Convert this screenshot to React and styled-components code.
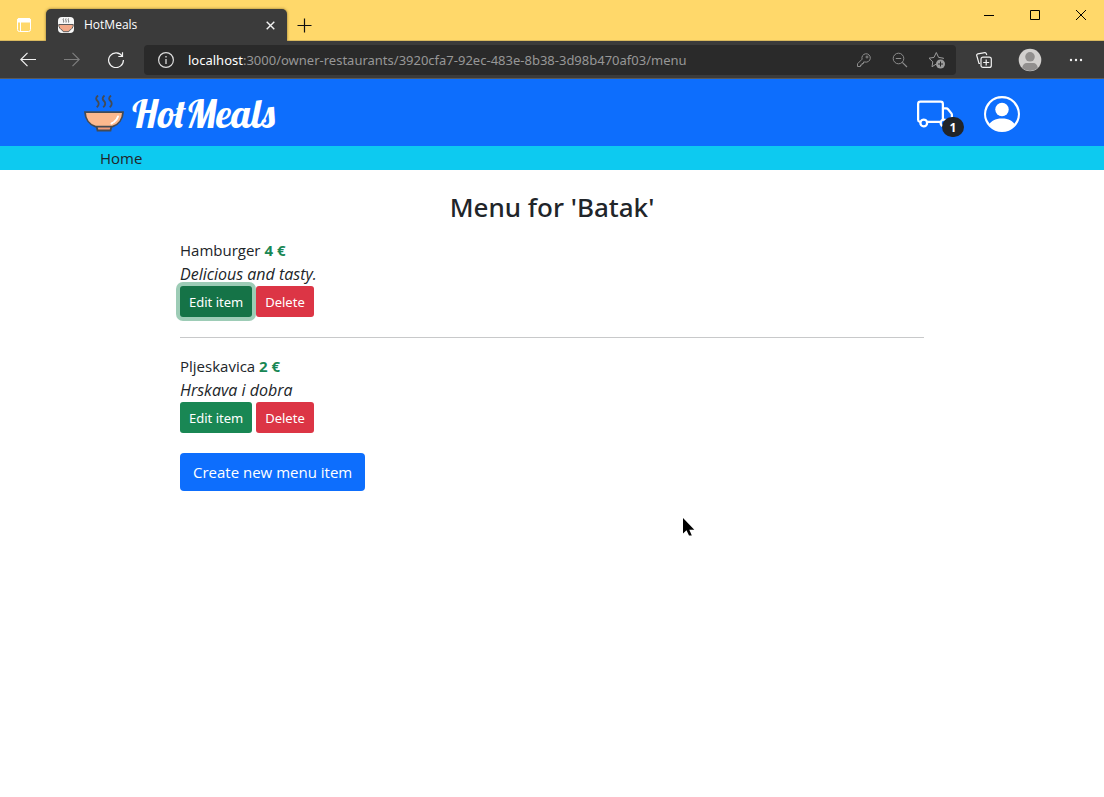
import React from "react";
import styled, { createGlobalStyle, css } from "styled-components";
import { BsTruck, BsPersonCircle } from "react-icons/bs";

const GlobalStyle = createGlobalStyle`
  *, *::before, *::after { box-sizing: border-box; }
  body {
    margin: 0;
    background: #fff;
    color: #212529;
    font-family: "Segoe UI", "Open Sans", "Noto Sans", sans-serif;
    font-size: 15px;
    line-height: 24px;
  }
  button, input { font: inherit; }
  svg { display: block; flex: none; }
`;

const TitleBar = styled.div`
  display: flex;
  align-items: flex-end;
  height: 41px;
  padding-left: 17px;
  background: #ffd86a;
  box-shadow: inset 0 -1px #d9b95f;
`;

const PlainButton = styled.button`
  display: flex;
  align-items: center;
  justify-content: center;
  flex: none;
  padding: 0;
  border: 0;
  background: none;
  color: ${(p) => p.$color || "#f2f2f2"};
`;

const TabActions = styled(PlainButton)`
  height: 32px;
  margin-right: 15px;
`;

const Tab = styled.div`
  display: flex;
  align-items: center;
  gap: 10px;
  width: 241px;
  height: 32px;
  padding: 0 12px;
  border-radius: 5px 5px 0 0;
  background: #3b3b3b;
  box-shadow: 0 0 3px rgba(60, 45, 0, 0.6);
  clip-path: inset(-4px -4px 0 -4px);
  color: #fff;
  font-size: 12px;
`;

const TabTitle = styled.span`
  flex: 1;
`;

const NewTab = styled(PlainButton)`
  height: 32px;
  margin-left: 10px;
`;

const WindowControls = styled.div`
  display: flex;
  align-self: flex-start;
  margin-left: auto;
`;

const WindowButton = styled(PlainButton)`
  width: 46px;
  height: 30px;
`;

const Toolbar = styled.div`
  display: flex;
  align-items: center;
  height: 38px;
  padding: 0 20px;
  background: #3b3b3b;
  border-bottom: 1px solid #5a5a5a;
`;

const ToolGroup = styled.div`
  display: flex;
  align-items: center;
  gap: ${(p) => p.$gap}px;
`;

const AddressBar = styled.div`
  display: flex;
  align-items: center;
  flex: 1;
  min-width: 0;
  height: 30px;
  margin: 0 20px;
  padding: 0 10px 0 14px;
  border-radius: 4px;
  background: #2a2a2a;
  font-family: "Segoe UI", "Noto Sans", sans-serif;
  font-size: 13px;
`;

const Host = styled.label`
  margin-left: 14px;
  color: #fff;
`;

const AddressInput = styled.input`
  flex: 1;
  min-width: 0;
  padding: 0;
  border: 0;
  outline: 0;
  background: none;
  color: #979797;
`;

const Container = styled.div`
  display: flex;
  align-items: center;
  max-width: 960px;
  margin: 0 auto;
  padding: 0 12px;
`;

const Header = styled.header`
  background: #0d6efd;
`;

const HeaderRow = styled(Container)`
  height: 67px;
  padding-top: 2px;
`;

const Brand = styled.a`
  display: flex;
  align-items: center;
  gap: 8px;
  color: #fff;
  font: 39px/38px Lobster, "Liberation Serif", serif;
  text-decoration: none;
`;

const HeaderActions = styled.div`
  display: flex;
  gap: 31px;
  margin-left: auto;
`;

const IconLink = styled.a`
  position: relative;
  color: #fff;
`;

const Badge = styled.span`
  position: absolute;
  right: -11px;
  bottom: -5px;
  width: 22px;
  height: 20px;
  border-radius: 10px;
  background: #212529;
  color: #fff;
  font-size: 12px;
  font-weight: 700;
  line-height: 21px;
  text-align: center;
`;

const Nav = styled.nav`
  background: #0dcaf0;
`;

const NavLink = styled.a`
  padding-left: 16px;
  color: #212529;
  text-decoration: none;
`;

const Main = styled.main`
  width: 80%;
  max-width: 768px;
  margin: 0 auto;
  padding: 20px 12px;
`;

const Title = styled.h1`
  margin: 0 0 14px;
  font-family: "Segoe UI", "Noto Sans", sans-serif;
  font-size: 26px;
  font-weight: 500;
  line-height: 34px;
  text-align: center;
`;

const MenuList = styled.ul`
  margin: 0 0 20px;
  padding: 0;
  list-style: none;
`;

const MenuItem = styled.li`
  & + & {
    margin-top: 20px;
    padding-top: 16px;
    border-top: 1px solid #c8c9ca;
  }
`;

const Price = styled.strong`
  color: #198754;
`;

const Description = styled.div`
  font-size: 16px;
  font-style: italic;
`;

const ItemActions = styled.div`
  display: flex;
  gap: 4px;
`;

const tones = { success: "#198754", danger: "#dc3545", primary: "#0d6efd" };

const Button = styled.button`
  padding: 6px 12px;
  border: 1px solid transparent;
  border-radius: 4px;
  background: ${(p) => tones[p.$tone]};
  background-clip: border-box;
  background-origin: border-box;
  color: #fff;
  line-height: 24px;
  ${(p) =>
    p.$small &&
    css`
      padding: 5px 8px 3px;
      border-radius: 3px;
      font-family: "Segoe UI", "Noto Sans", sans-serif;
      font-size: 13px;
      line-height: 21px;
    `}
  ${(p) =>
    p.$focused &&
    css`
      background: #157347;
      box-shadow: 0 0 0 4px rgba(60, 153, 110, 0.5);
    `}
`;

const Pointer = styled.svg`
  position: absolute;
  left: 683px;
  top: 518px;
  pointer-events: none;
`;

function Line({ size = 16, width = size, d, stroke = 1, children }) {
  return (
    <svg width={width} height={size} viewBox={`0 0 ${width} ${size}`} fill="none" stroke="currentColor" strokeWidth={stroke} aria-hidden="true">
      {d && <path d={d} />}
      {children}
    </svg>
  );
}

function Bowl() {
  return (
    <svg width="40" height="37" viewBox="0 0 40 37" fill="none" stroke="#444b54" strokeWidth="1.8" aria-hidden="true">
      <path d="M14 .5c-2.800 2.500-2 4-.5 5.500s2 4-.8 6.300M20.500 .5c-2.800 2.500-2 4-.5 5.500s2 4-.8 6.300M27 .5c-2.800 2.500-2 4-.5 5.500s2 4-.8 6.300" />
      <path d="M12.500 31h15l-1 4.500h-13z" fill="#f29c78" />
      <path d="M1 17.200h38c-.3 7-4.500 12.500-10.500 14.500h-17C5.500 29.700 1.300 24.200 1 17.200z" fill="#fdb98e" />
      <path d="M34 21.500c-.7 2.300-2 4-4 5.500M27.500 28.500l1-.6" stroke="#fff" strokeWidth="2" strokeLinecap="round" />
    </svg>
  );
}

function Favicon() {
  return (
    <svg width="16" height="16" viewBox="0 0 16 16" aria-hidden="true">
      <rect width="16" height="16" rx="4" fill="#f7f7f7" />
      <path d="M5.500 1.500c-1 1.500 .8 2 0 4M8 1.500c-1 1.500 .8 2 0 4M10.500 1.500c-1 1.500 .8 2 0 4" fill="none" stroke="#666" />
      <path d="M.7 7.500h14.600c0 3-1.800 5-4 6l-.5 1.200H5.200l-.5-1.200c-2.200-1-4-3-4-6z" fill="#f2a988" stroke="#5a5a5a" />
    </svg>
  );
}

function BrowserChrome() {
  return (
    <>
      <TitleBar>
        <TabActions aria-label="Tab actions" $color="#fff">
          <Line size={14}>
            <rect x=".5" y=".5" width="13" height="13" rx="2" />
            <path d="M3.500 4v10" />
            <path d="M2 .5h10a1.500 1.500 0 0 1 1.500 1.500v2H.5V2A1.500 1.500 0 0 1 2 .5z" fill="currentColor" />
          </Line>
        </TabActions>
        <Tab>
          <Favicon />
          <TabTitle>HotMeals</TabTitle>
          <PlainButton aria-label="Close tab">
            <Line size={9} d="M.7 .7l7.600 7.600M8.300 .7L.7 8.300" stroke={1.4} />
          </PlainButton>
        </Tab>
        <NewTab aria-label="New tab" $color="#111">
          <Line size={15} d="M7.500 .5v14M.5 7.500h14" stroke={1.2} />
        </NewTab>
        <WindowControls>
          <WindowButton aria-label="Minimize" $color="#000"><Line size={10} d="M0 5.500h10" /></WindowButton>
          <WindowButton aria-label="Maximize" $color="#000"><Line size={10} d="M.5 .5h9v9h-9z" /></WindowButton>
          <WindowButton aria-label="Close" $color="#000"><Line size={10} d="M0 0l10 10M10 0L0 10" /></WindowButton>
        </WindowControls>
      </TitleBar>
      <Toolbar>
        <ToolGroup $gap={28}>
          <PlainButton aria-label="Back"><Line d="M16 7.500H.8M7.500 .8L.8 7.500l6.700 6.700" stroke={1.200} /></PlainButton>
          <PlainButton aria-label="Forward" $color="#7d7d7d"><Line d="M0 7.500h15.200M8.500 .8L15.200 7.500l-6.700 6.700" stroke={1.200} /></PlainButton>
          <PlainButton aria-label="Reload"><Line d="M14.300 4.300A7.400 7.400 0 1 0 15.400 8M14.500 .3v4.200h-4.200" stroke={1.200} /></PlainButton>
        </ToolGroup>
        <AddressBar>
          <PlainButton aria-label="Site information" $color="#dcdcdc">
            <Line>
              <circle cx="8" cy="8" r="7.400" strokeWidth="1.200" />
              <path d="M8 7v5M8 4v1.500" strokeWidth="1.300" />
            </Line>
          </PlainButton>
          <Host htmlFor="address">localhost</Host>
          <AddressInput id="address" defaultValue=":3000/owner-restaurants/3920cfa7-92ec-483e-8b38-3d98b470af03/menu" />
          <ToolGroup $gap={20}>
            <PlainButton aria-label="Saved passwords" $color="#8d8d8d">
              <Line>
                <path d="M6.100 7.200A4.200 4.200 0 1 1 9 10H7.500v1.500H6V13H4.500v1.500H1.500V11.800z" strokeLinejoin="round" />
                <circle cx="11" cy="5" r="1" />
              </Line>
            </PlainButton>
            <PlainButton aria-label="Zoom" $color="#8d8d8d">
              <Line>
                <circle cx="6.500" cy="6.500" r="5.300" />
                <path d="M10.300 10.300l4.700 4.700M3.800 6.500h5.400" strokeWidth="1.200" />
              </Line>
            </PlainButton>
            <PlainButton aria-label="Add to favorites" $color="#9b9b9b">
              <Line width={18} size={18}>
                <path d="M8.200 13L4 15.800l.8-5L1 7.200l5-.8L8.300 1.500l2.300 4.900l5 .8l-1 1" strokeLinejoin="round" />
                <circle cx="12.500" cy="13" r="4.500" fill="currentColor" stroke="none" />
                <path d="M12.500 10.500v5M10 13h5" stroke="#2a2a2a" />
              </Line>
            </PlainButton>
          </ToolGroup>
        </AddressBar>
        <ToolGroup $gap={26}>
          <PlainButton aria-label="Collections">
            <Line stroke={1.2}>
              <path d="M4 11.500H3L.8 3.800a1.500 1.500 0 0 1 1-2l7-1.200a1.500 1.500 0 0 1 1.500 1L10.800 3" />
              <rect x="5" y="5.200" width="10.300" height="10.200" rx="2" />
              <path d="M10.200 7.500v6M7.200 10.500h6" />
            </Line>
          </PlainButton>
          <PlainButton aria-label="Profile">
            <svg width="24" height="24" viewBox="0 0 24 24" aria-hidden="true">
              <circle cx="12" cy="12" r="11.300" fill="#d2d0ce" />
              <circle cx="12" cy="8.800" r="4.800" fill="#918f8e" />
              <path d="M4.300 20c0-3 2-5 4.500-5h6.400c2.500 0 4.500 2 4.500 5a11.300 11.300 0 0 1-15.400 0z" fill="#918f8e" />
            </svg>
          </PlainButton>
          <PlainButton aria-label="Settings and more">
            <Line>
              <g fill="currentColor" stroke="none">
                <circle cx="3" cy="8" r="1.200" /><circle cx="8" cy="8" r="1.200" /><circle cx="13" cy="8" r="1.200" />
              </g>
            </Line>
          </PlainButton>
        </ToolGroup>
      </Toolbar>
    </>
  );
}

const items = [
  { name: "Hamburger", price: 4, description: "Delicious and tasty.", focused: true },
  { name: "Pljeskavica", price: 2, description: "Hrskava i dobra" },
];

export default function App() {
  return (
    <>
      <GlobalStyle />
      <BrowserChrome />
      <Header>
        <HeaderRow>
          <Brand href="#"><Bowl />HotMeals</Brand>
          <HeaderActions>
            <IconLink href="#" aria-label="Orders"><BsTruck size={36} /><Badge>1</Badge></IconLink>
            <IconLink href="#" aria-label="Account"><BsPersonCircle size={36} /></IconLink>
          </HeaderActions>
        </HeaderRow>
      </Header>
      <Nav>
        <Container><NavLink href="#">Home</NavLink></Container>
      </Nav>
      <Main>
        <Title>Menu for 'Batak'</Title>
        <MenuList>
          {items.map((item) => (
            <MenuItem key={item.name}>
              <div>{item.name} <Price>{item.price} €</Price></div>
              <Description>{item.description}</Description>
              <ItemActions>
                <Button $small $tone="success" $focused={item.focused}>Edit item</Button>
                <Button $small $tone="danger">Delete</Button>
              </ItemActions>
            </MenuItem>
          ))}
        </MenuList>
        <Button $tone="primary">Create new menu item</Button>
      </Main>
      <Pointer width="12" height="19" viewBox="0 0 12 19" aria-hidden="true">
        <path d="M0 0v15.500l3.500-3.300l2.500 5.300h2.800l-2.500-5.800h5z" fill="#000" />
      </Pointer>
    </>
  );
}
